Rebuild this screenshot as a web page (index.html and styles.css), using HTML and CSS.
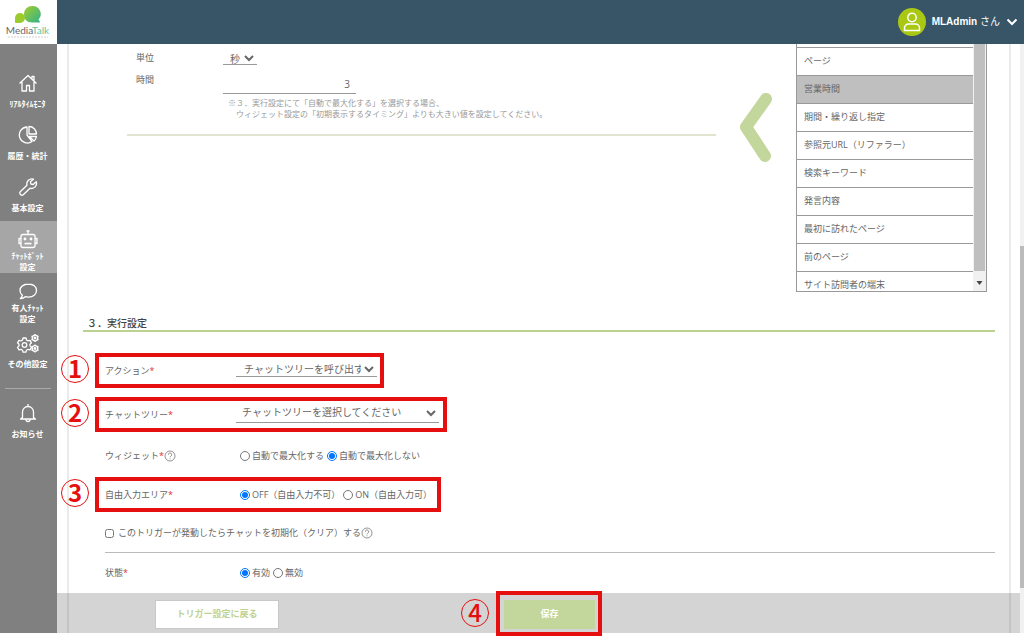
FILE: index.html
```html
<!DOCTYPE html>
<html lang="ja">

<head>
    <meta charset="UTF-8">
    <meta name="viewport" content="width=device-width, initial-scale=1.0">
    <title>トリガー設定 | MediaTalk</title>
    <link rel="stylesheet" href="styles.css">
</head>

<body>
    <div class="app">
        <aside class="sidebar">
            <a class="logo" href="#">
                <svg width="28" height="20" viewBox="0 0 28 20">
                    <defs>
                        <linearGradient id="leaf" x1="0" y1="0" x2="1" y2="1">
                            <stop offset="0" stop-color="#a4cc2c" />
                            <stop offset="1" stop-color="#2fb38a" />
                        </linearGradient>
                    </defs>
                    <path d="M6 8a5 5 0 0 0-5 5v4q0 1 1 1h4a5 5 0 0 0 0-10z" fill="#9ccb2e" />
                    <path d="M18 1a8 8 0 0 0-8 8c0 5 3 8.500 8 8.500h7q1.500 0 .5-1.500l-1-1.500A8 8 0 0 0 18 1z" fill="url(#leaf)" />
                </svg>
                <span class="logo-name">Media<em>Talk</em></span>
                <svg width="42" height="2" viewBox="0 0 42 2">
                    <path d="M1 1h40" stroke="#ccd2cf" stroke-dasharray="2 1" />
                </svg>
            </a>
            <nav class="menu">
                <a class="menu-item" href="#">
                    <svg class="icon" viewBox="0 0 20 20">
                        <path d="M1.500 10.500 10 2.500l8.500 8M4 9v9h4.500v-5.500h3V18H16V9M14 5.500V3.500h2V7.500" />
                    </svg>
                    <span>ﾘｱﾙﾀｲﾑﾓﾆﾀ</span>
                </a>
                <a class="menu-item" href="#">
                    <svg class="icon" viewBox="0 0 20 20">
                        <path d="M9 2a8 8 0 1 0 5 14.500L9 10zM11 1.500V9h7.500A7.500 7.500 0 0 0 11 1.500zM11.500 11.500h7a8 8 0 0 1-2.500 4.500z" />
                    </svg>
                    <span>履歴・統計</span>
                </a>
                <a class="menu-item" href="#">
                    <svg class="icon" viewBox="0 0 20 20">
                        <path d="M15.500 2.200a5 5 0 0 0-6.500 6L2.500 14.500a2.100 2.100 0 0 0 3 3L12 11.200a5 5 0 0 0 6.200-6.500l-3 2.800-2.300-.5-.5-2.200z" />
                    </svg>
                    <span>基本設定</span>
                </a>
                <a class="menu-item two-line active" href="#">
                    <svg class="icon" viewBox="0 0 20 20">
                        <rect x="3" y="5.500" width="14" height="13" rx="2" />
                        <path d="M10 5.500V2M8.500 2h3M3 9.500H1v5h2M17 9.500h2v5h-2M6.500 14.500h7M7.500 14v1.500M10 14v1.500M12.500 14v1.500" />
                        <circle cx="7" cy="10" r=".8" />
                        <circle cx="13" cy="10" r=".8" />
                    </svg>
                    <span>ﾁｬｯﾄﾎﾞｯﾄ<br>設定</span>
                </a>
                <a class="menu-item two-line" href="#">
                    <svg class="icon" viewBox="0 0 20 20">
                        <path d="M10.500 3C5.500 3 2 5.800 2 9.500c0 2 1 3.700 2.300 4.800-.2 1.500-.9 2.500-2 3.200 2 .1 3.700-.5 5-1.800 1 .3 2 .4 3.200.4 4.800 0 8-2.900 8-6.600S15.300 3 10.500 3z" />
                    </svg>
                    <span>有人ﾁｬｯﾄ<br>設定</span>
                </a>
                <a class="menu-item" href="#">
                    <svg class="icon icon-wide" viewBox="0 0 24 20">
                        <path d="M7 5h3l.5 2 1.500.9 2-.6 1.500 2.500-1.500 1.500v1.600l1.500 1.500-1.500 2.500-2-.6-1.500.9-.5 2H7l-.5-2L5 16.300l-2 .6-1.500-2.500L3 12.900v-1.600L1.500 9.800 3 7.300l2 .6L6.500 7z" />
                        <circle cx="8.500" cy="12" r="2.300" />
                        <circle cx="19" cy="5" r="2.800" />
                        <circle cx="19" cy="5" r=".8" />
                        <circle cx="19" cy="15.500" r="2.800" />
                        <circle cx="19" cy="15.500" r=".8" />
                        <path d="M19 1v1.200M19 7.800V9M15.500 3l1 .6M21.500 6.400l1 .6M22.500 3l-1 .6M15.500 7l1-.6M19 11.500v1.200M19 18.300v1.200M15.500 13.500l1 .6M21.500 16.900l1 .6M22.500 13.500l-1 .6M15.500 17.500l1-.6" />
                    </svg>
                    <span>その他設定</span>
                </a>
                <hr class="menu-line">
                <a class="menu-item" href="#">
                    <svg class="icon" viewBox="0 0 20 20">
                        <path d="M10 1v2M4.500 14.500V9a5.500 5.500 0 0 1 11 0v5.500l2 1.500h-15zM8 16.500a2 2 0 0 0 4 0" />
                    </svg>
                    <span>お知らせ</span>
                </a>
            </nav>
        </aside>

        <div class="page">
            <header class="topbar">
                <button class="user" type="button">
                    <svg width="28" height="28" viewBox="0 0 28 28">
                        <circle cx="14" cy="14" r="14" fill="#a9c813" />
                        <g fill="none" stroke="#fff" stroke-width="1.500">
                            <circle cx="14" cy="9.500" r="4.200" />
                            <path d="M6.500 22.500v-2.500a4 4 0 0 1 4-4h7a4 4 0 0 1 4 4v2.500z" />
                        </g>
                    </svg>
                    <span><b>MLAdmin</b> さん</span>
                    <svg width="12" height="8" viewBox="0 0 12 8">
                        <path d="M1.500 1.500 6 6l4.500-4.500" fill="none" stroke="#fff" stroke-width="2" />
                    </svg>
                </button>
            </header>

            <div class="body">
                <main class="panel">
                    <section class="condition">
                        <div class="condition-form">
                            <div class="field">
                                <label for="unit">単位</label>
                                <select id="unit" class="select select-unit">
                                    <option>秒</option>
                                </select>
                            </div>
                            <div class="field field-time">
                                <label for="time">時間</label>
                                <div>
                                    <input id="time" class="time" type="text" value="3">
                                    <p class="note">※３．実行設定にて「自動で最大化する」を選択する場合、<br>　ウィジェット設定の「初期表示するタイミング」よりも大きい値を設定してください。</p>
                                </div>
                            </div>
                        </div>
                        <svg class="arrow" width="34" height="72" viewBox="0 0 34 72">
                            <path d="M27 7 7 35l19 29" fill="none" stroke="#c3d69b" stroke-width="12" stroke-linecap="round" stroke-linejoin="round" />
                        </svg>
                        <div class="picker">
                            <ul class="picker-list">
                                <li><button type="button">ページ</button></li>
                                <li><button type="button" class="selected">営業時間</button></li>
                                <li><button type="button">期間・繰り返し指定</button></li>
                                <li><button type="button">参照元URL（リファラー）</button></li>
                                <li><button type="button">検索キーワード</button></li>
                                <li><button type="button">発言内容</button></li>
                                <li><button type="button">最初に訪れたページ</button></li>
                                <li><button type="button">前のページ</button></li>
                                <li><button type="button">サイト訪問者の端末</button></li>
                            </ul>
                            <div class="picker-bar">
                                <div class="picker-thumb"></div>
                                <svg width="13" height="20" viewBox="0 0 13 20">
                                    <path d="M3.500 10h6L6.500 14z" fill="#444" />
                                </svg>
                            </div>
                        </div>
                    </section>

                    <section class="run">
                        <h2>３．実行設定</h2>
                        <div class="rows">
                            <div class="row tall">
                                <label for="action">アクション<i>*</i></label>
                                <select id="action" class="select select-action">
                                    <option>チャットツリーを呼び出す</option>
                                </select>
                                <div class="mark mark-action"><span class="num">1</span></div>
                            </div>
                            <div class="row tall">
                                <label for="tree">チャットツリー<i>*</i></label>
                                <select id="tree" class="select select-tree">
                                    <option>チャットツリーを選択してください</option>
                                </select>
                                <div class="mark mark-tree"><span class="num">2</span></div>
                            </div>
                            <div class="row" role="radiogroup" aria-labelledby="widget">
                                <span class="label" id="widget">ウィジェット<i>*</i><svg class="help" viewBox="0 0 12 12"><circle cx="6" cy="6" r="5" /><path d="M4.300 4.800a1.700 1.700 0 1 1 2.500 1.400Q6 6.600 6 7.300M6 8.400v.9" /></svg></span>
                                <div class="options">
                                    <label><input type="radio" name="widget">自動で最大化する</label>
                                    <label><input type="radio" name="widget" checked>自動で最大化しない</label>
                                </div>
                            </div>
                            <div class="row" role="radiogroup" aria-labelledby="free">
                                <span class="label" id="free">自由入力エリア<i>*</i></span>
                                <div class="options">
                                    <label><input type="radio" name="free" checked>OFF（自由入力不可）</label>
                                    <label><input type="radio" name="free">ON（自由入力可）</label>
                                </div>
                                <div class="mark mark-free"><span class="num">3</span></div>
                            </div>
                            <div class="row lined">
                                <label class="check"><input type="checkbox">このトリガーが発動したらチャットを初期化（クリア）する</label>
                                <svg class="help" viewBox="0 0 12 12"><circle cx="6" cy="6" r="5" /><path d="M4.300 4.800a1.700 1.700 0 1 1 2.500 1.400Q6 6.600 6 7.300M6 8.400v.9" /></svg>
                            </div>
                            <div class="row" role="radiogroup" aria-labelledby="state">
                                <span class="label" id="state">状態<i>*</i></span>
                                <div class="options">
                                    <label><input type="radio" name="state" checked>有効</label>
                                    <label><input type="radio" name="state">無効</label>
                                </div>
                            </div>
                        </div>
                    </section>
                </main>
                <div class="page-bar">
                    <div class="page-thumb"></div>
                </div>

                <footer class="actions">
                    <button class="btn btn-back" type="button">トリガー設定に戻る</button>
                    <div class="save">
                        <button class="btn btn-save" type="button">保存</button>
                        <div class="mark mark-save"><span class="num">4</span></div>
                    </div>
                </footer>
            </div>
        </div>
    </div>
</body>

</html>
```
FILE: styles.css
```css
* {
    box-sizing: border-box;
}

body {
    margin: 0;
    padding-bottom: 11px;
    background: #fff;
    color: #666;
    font: 9px/12px "Open Sans", "Noto Sans CJK JP", sans-serif;
}

button,
input,
select {
    font: inherit;
    color: inherit;
}

.app {
    display: flex;
    min-height: calc(100vh - 11px);
}

/* サイドバー */
.sidebar {
    flex: none;
    width: 57px;
    background: #808080;
}

.logo {
    display: flex;
    flex-direction: column;
    align-items: center;
    height: 44px;
    padding: 5px 2px 0 0;
    background: #fff;
    text-decoration: none;
}

.logo-name {
    font: 10px/11px Lato, sans-serif;
    color: #666;
}

.logo-name em {
    font-style: normal;
    color: #5fc4a0;
}

.menu {
    padding-top: 21px;
}

.menu-item {
    display: flex;
    flex-direction: column;
    align-items: center;
    gap: 5px;
    height: 52px;
    padding: 8px 2px 0 0;
    color: #fff;
    font-size: 8px;
    font-weight: bold;
    line-height: 11px;
    text-align: center;
    text-decoration: none;
}

.menu-item.two-line {
    gap: 1px;
}

.menu-item.active {
    background: #a6a6a6;
}

.icon {
    flex: none;
    width: 20px;
    height: 20px;
    fill: none;
    stroke: #fff;
    stroke-width: 1.3;
    stroke-linejoin: round;
}

.icon-wide {
    width: 24px;
}

.menu-line {
    margin: 11px 6px 6px 5px;
    border: 0;
    border-top: 1px solid #aaa;
}

/* ヘッダー */
.page {
    flex: 1;
    display: flex;
    flex-direction: column;
    min-width: 0;
}

.topbar {
    display: flex;
    justify-content: flex-end;
    align-items: center;
    height: 44px;
    padding-right: 6px;
    background: #385567;
}

.user {
    display: flex;
    align-items: center;
    gap: 6px;
    padding: 0;
    border: 0;
    background: none;
    color: #fff;
    font: 10px/14px "Liberation Sans", "Noto Sans CJK JP", sans-serif;
}

/* 本体 */
.body {
    position: relative;
    flex: 1;
    display: flex;
}

.panel {
    flex: 1;
    margin: 0 9px 0 10px;
    padding: 0 14px 40px;
    border: solid #ebebeb;
    border-width: 0 2px;
}

.page-bar {
    width: 4px;
    padding-top: 202px;
    background: #f1f1f1;
}

.page-thumb {
    height: 342px;
    background: #bbb;
}

.condition {
    display: flex;
    align-items: flex-start;
    padding: 0 8px 0 44px;
}

.condition-form {
    flex: 1;
    padding: 7px 0 15px 9px;
    border-bottom: 2px solid #dfe5cf;
}

.field {
    display: grid;
    grid-template-columns: 87px 1fr;
    align-items: center;
    justify-items: start;
}

.field-time {
    align-items: start;
    padding-top: 9px;
}

.select {
    border: 0;
    border-bottom: 1px solid #999;
    border-radius: 0;
    background: transparent;
    font-size: 10px;
}

.select-unit {
    width: 34px;
    height: 14px;
    padding-left: 3px;
}

.time {
    display: block;
    width: 133px;
    height: 20px;
    padding: 0 6px;
    border: 0;
    border-bottom: 1px solid #999;
    background: none;
    font-size: 10px;
    text-align: right;
}

.note {
    margin: 3px 0 0 5px;
    color: #999;
    font-size: 8px;
    line-height: 11px;
}

.arrow {
    flex: none;
    margin: 48px 23px 0;
}

.picker {
    display: flex;
    width: 191px;
    height: 248px;
    border: 1px solid #999;
    border-top: 0;
    overflow: hidden;
}

.picker-list {
    flex: 1;
    margin: 0;
    padding: 3px 0 0;
    list-style: none;
}

.picker-list button {
    display: block;
    width: 100%;
    height: 28px;
    padding: 0 7px 2px;
    border: 0;
    border-top: 1px solid #999;
    background: #fff;
    text-align: left;
}

.picker-list button.selected {
    background: #bfbfbf;
}

.picker-bar {
    display: flex;
    flex-direction: column;
    width: 13px;
    background: #f1f1f1;
}

.picker-thumb {
    flex: 1;
    margin: 0 1px;
    background: #bfbfbf;
}

/* 実行設定 */
.run {
    padding-top: 24px;
}

.run h2 {
    margin: 0;
    padding: 0 4px;
    border-bottom: 2px solid #bcd291;
    color: #444;
    font-size: 10px;
    font-weight: 500;
    line-height: 14px;
}

.rows {
    padding: 16px 0 0 22px;
}

.row {
    position: relative;
    display: flex;
    align-items: center;
    height: 39px;
}

.row.tall {
    height: 44px;
}

.row.tall > label {
    padding-top: 2px;
}

.row.lined {
    border-bottom: 1px solid #bbb;
}

.row > label:not(.check),
.row > .label {
    display: flex;
    align-items: center;
    width: 131px;
}

.row i {
    color: #e03030;
    font-style: normal;
}

.row .select {
    margin-bottom: 3px;
}

.select-action {
    width: 141px;
    height: 16px;
    padding-left: 4px;
}

.select-tree {
    width: 203px;
    height: 20px;
    padding-left: 2px;
}

.options {
    display: flex;
    gap: 3px;
    padding-left: 4px;
}

.options label,
.check {
    display: flex;
    align-items: center;
    gap: 2px;
}

.options input {
    width: 10px;
    height: 10px;
    margin: 0;
}

.check {
    gap: 4px;
}

.check input {
    width: 9px;
    height: 9px;
    margin: 0;
}

.help {
    width: 12px;
    height: 12px;
    fill: none;
    stroke: #777;
    stroke-width: 0.8;
}

/* 下部ボタン */
.actions {
    position: absolute;
    left: 0;
    right: 4px;
    bottom: 0;
    display: flex;
    align-items: center;
    gap: 225px;
    height: 40px;
    padding: 2px 0 0 98px;
    background: rgba(0, 0, 0, .17);
}

.btn {
    height: 29px;
    padding: 0;
    border: 1px solid #c8c8c8;
    font-weight: bold;
}

.btn-back {
    width: 124px;
    background: #fff;
    color: #bdd28f;
}

.btn-save {
    display: block;
    width: 91px;
    border-color: #c3d69b;
    background: #c3d69b;
    color: #fff;
}

.save {
    position: relative;
}

/* 手順の赤枠と番号 */
.mark {
    position: absolute;
    left: -10px;
    top: 5px;
    height: 35px;
    border: 4px solid #e60f0f;
    pointer-events: none;
}

.mark-action {
    width: 289px;
}

.mark-tree {
    width: 352px;
}

.mark-free {
    top: 2px;
    width: 346px;
}

.mark-save {
    left: -8px;
    top: -9px;
    width: 106px;
    height: 45px;
}

.num {
    position: absolute;
    left: -38px;
    top: -2px;
    width: 28px;
    height: 28px;
    border: 1px solid #e60f0f;
    border-radius: 50%;
    color: #e60f0f;
    font: bold 24px/24px "Noto Sans CJK JP", sans-serif;
    text-align: center;
}

.mark-save .num {
    left: -39px;
    top: 4px;
    font-weight: 500;
}
```
